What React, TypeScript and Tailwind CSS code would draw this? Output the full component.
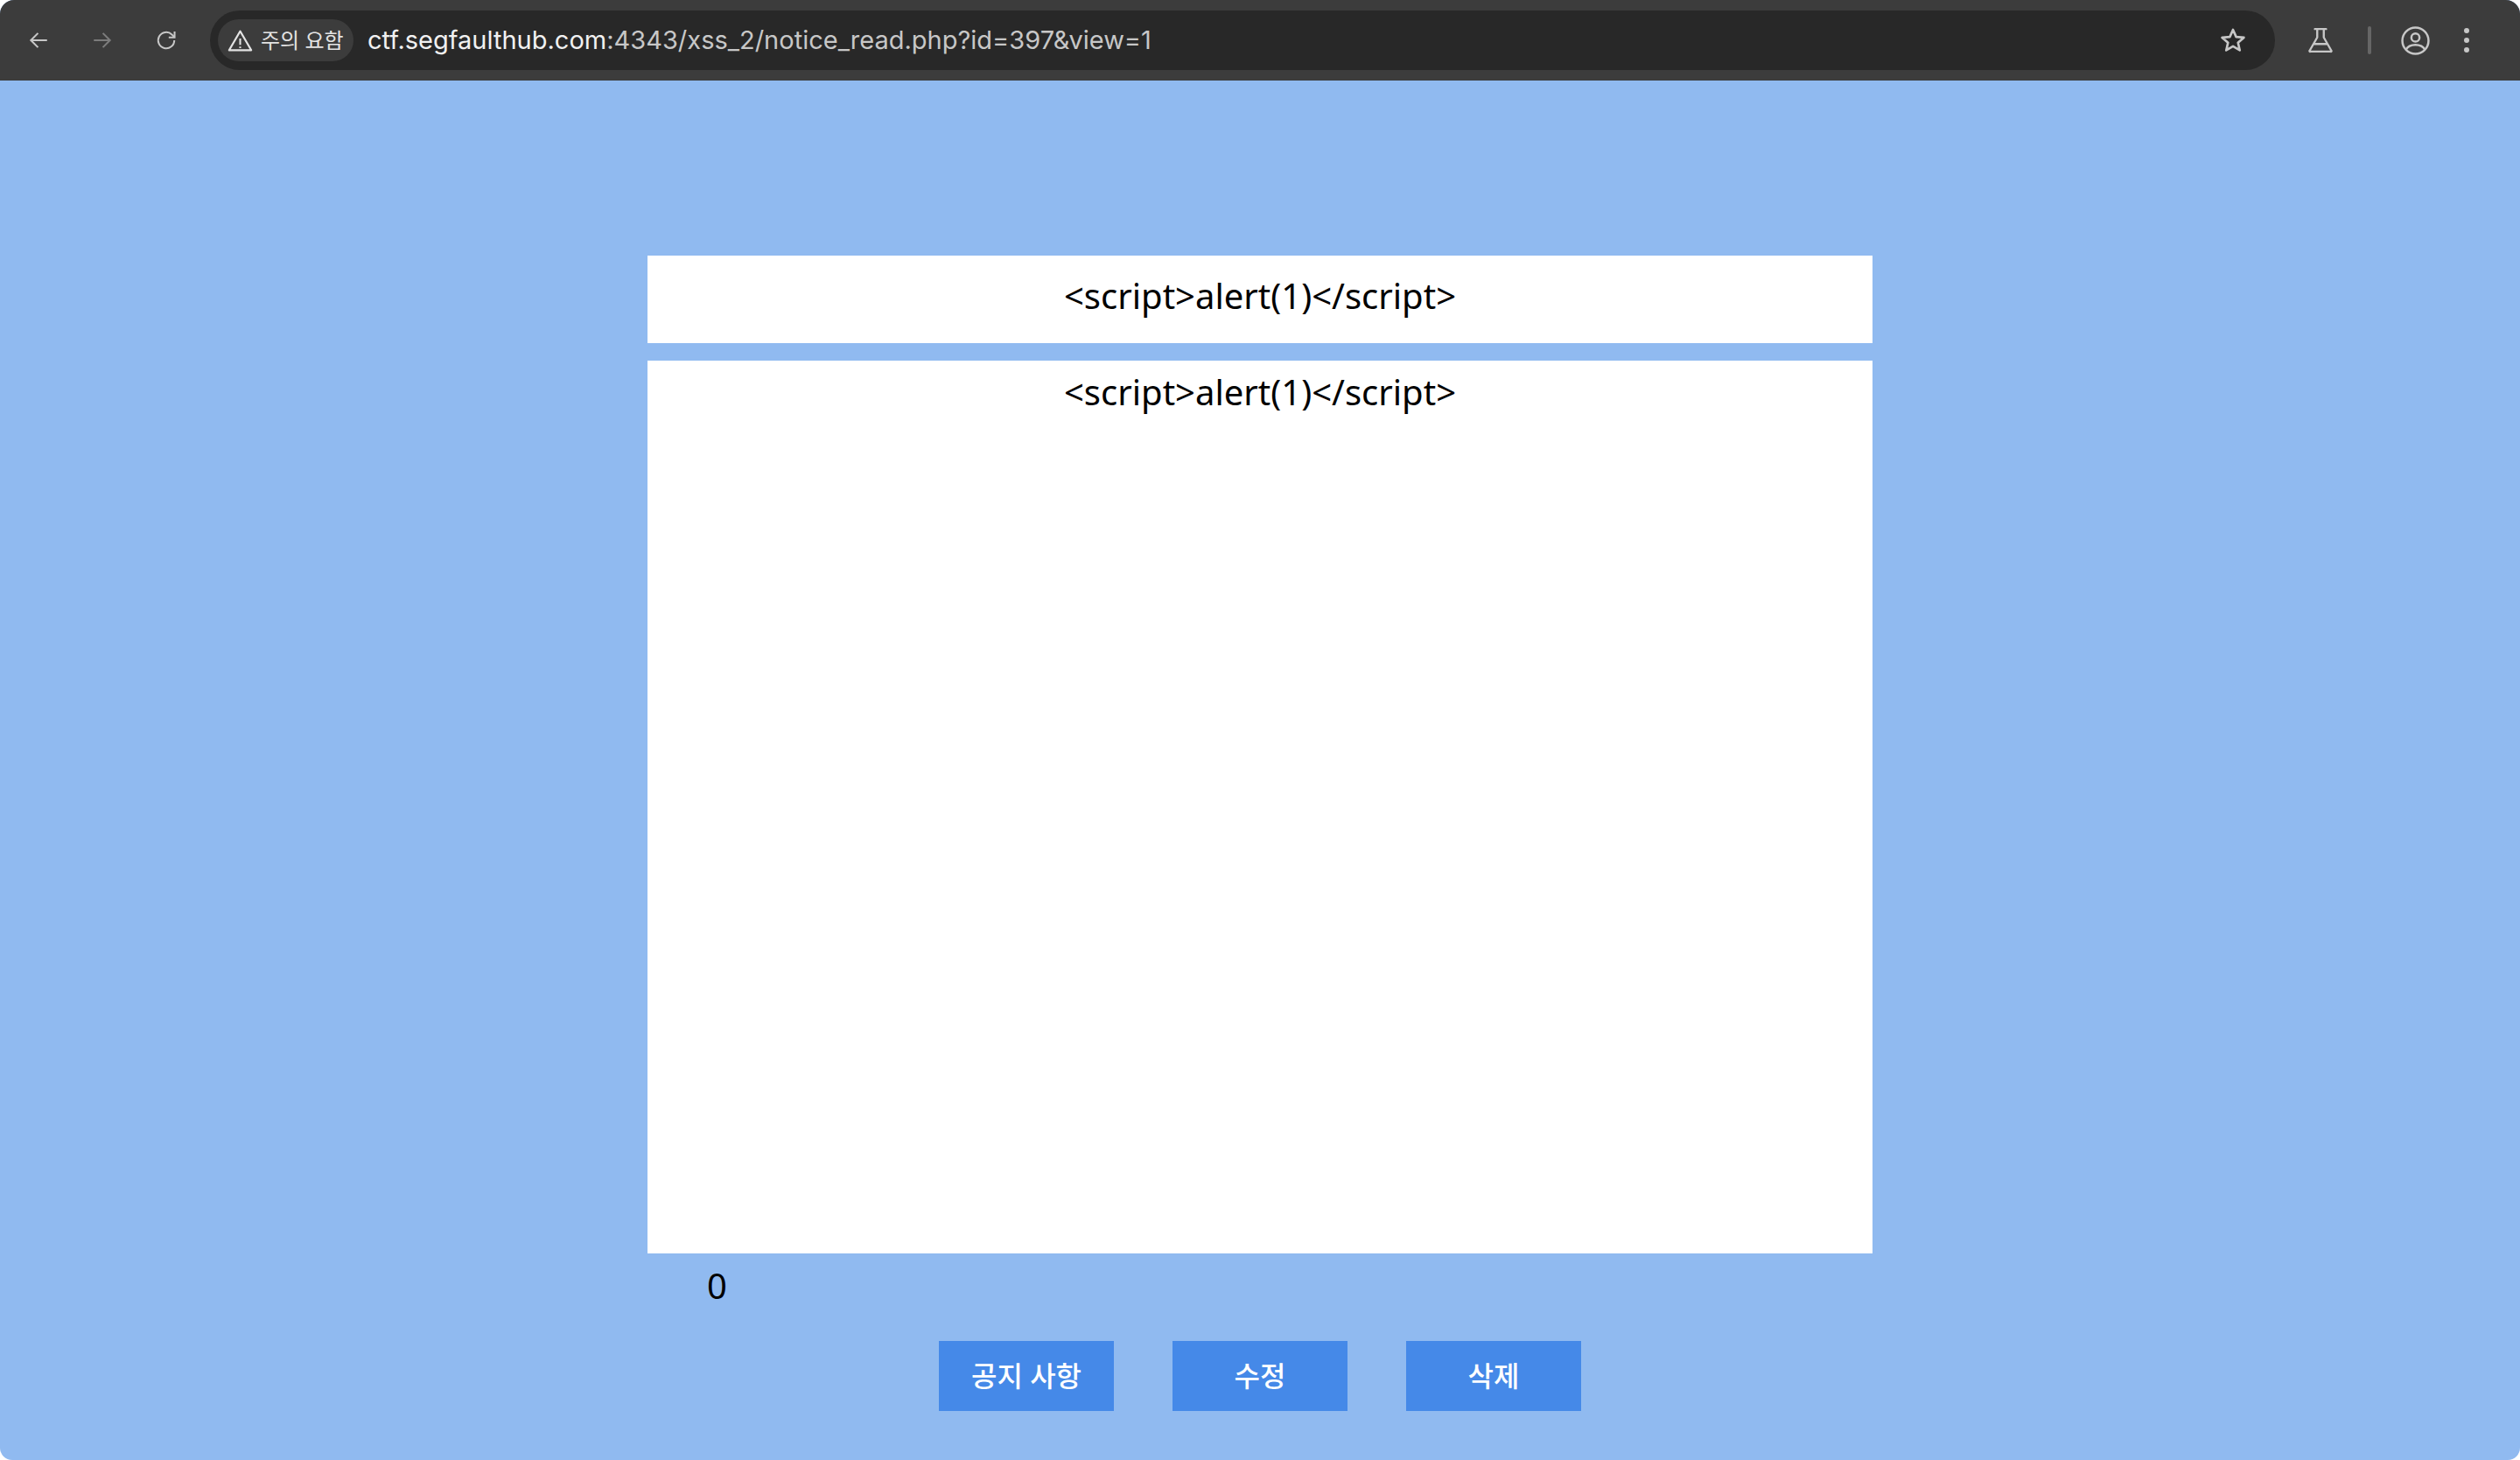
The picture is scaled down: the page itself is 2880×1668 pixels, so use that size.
import React from "react";

const kr = "font-['Noto_Sans','Noto_Sans_CJK_KR',sans-serif]";

function Back({ className }: { className: string }) {
  return (
    <svg viewBox="0 0 24 24" className={className} fill="none" stroke="currentColor" strokeWidth="1.9">
      <path d="M21 12H4M11.5 4.5 4 12l7.5 7.5" />
    </svg>
  );
}

export default function App() {
  return (
    <div className="h-[1668px] w-[2880px] overflow-hidden rounded-t-[16px] rounded-b-[14px] bg-[#90baf0] flex flex-col">
      <header className="h-[92px] shrink-0 bg-[#3c3c3c] flex items-center text-[#c7c7c7] font-['Inter',sans-serif]">
        <div className="w-[240px] shrink-0 flex items-center pl-[31px] gap-[47px]">
        <Back className="w-[26px] h-[26px]" />
        <Back className="w-[26px] h-[26px] rotate-180 text-[#7c7c7c]" />
        <svg viewBox="0 0 24 24" className="w-[26px] h-[26px]" fill="none" stroke="currentColor" strokeWidth="1.9">
          <path d="M20.5 12a8.5 8.5 0 1 1-2.6-6.1L20.5 8.6" />
          <path d="M20.8 2.8v6.2h-6.2" />
        </svg>
        </div>
        <div className="w-[2360px] h-[68px] rounded-full bg-[#282828] flex items-center pl-[9px] pr-[32px]">
          <div className={`w-[155px] h-[48px] rounded-full bg-[#3c3c3c] flex items-center pl-[11px] gap-[9px] text-[#e3e3e3] text-[24px] ${kr}`}>
            <svg viewBox="0 0 24 24" className="w-[29px] h-[29px] shrink-0" fill="none" stroke="currentColor" strokeWidth="1.7" strokeLinejoin="round">
              <path d="M12 3 22.5 21h-21zM12 10v6M12 17.5v1.5" />
            </svg>
            <span className="whitespace-nowrap">주의 요함</span>
          </div>
          <div className="ml-[16px] text-[29px] whitespace-nowrap text-[#c7c7c7]">
            <span className="text-[#f1f1f1]">ctf.segfaulthub.com</span>:4343/xss_2/notice_read.php?id=397&amp;view=1
          </div>
          <svg viewBox="0 0 24 24" className="ml-auto w-[32px] h-[32px] shrink-0" fill="none" stroke="currentColor" strokeWidth="2" strokeLinejoin="round">
            <path d="m12 3 2.7 6.1 6.6.6-5 4.4 1.5 6.5L12 17.2l-5.8 3.4 1.5-6.5-5-4.4 6.6-.6z" />
          </svg>
        </div>
        <div className="flex-1 flex items-center pl-[37px]">
          <svg viewBox="0 0 28 28" className="w-[30px] h-[30px] shrink-0" fill="none" stroke="currentColor" strokeWidth="2.2" strokeLinejoin="round" strokeLinecap="round">
            <path d="M8 2h12M10.5 2v9L2.5 25a.5.5 0 0 0 .5 1h22a.5.5 0 0 0 .5-1L17.5 11V2M7 18h14" />
          </svg>
          <div className="ml-[39px] w-[4px] h-[32px] rounded-full bg-[#666666]" />
          <svg viewBox="0 0 32 32" className="ml-[34px] w-[33px] h-[33px] shrink-0" fill="none" stroke="currentColor" strokeWidth="2.4">
            <circle cx="16" cy="16" r="14.5" />
            <circle cx="16" cy="12.5" r="4.5" />
            <path d="M5.5 26c2-4 6-5.5 10.500-5.500S24.500 22 26.500 26" />
          </svg>
          <div className="ml-[39px] flex flex-col gap-[5px]">
            <div className="w-[6px] h-[6px] rounded-full bg-[#c7c7c7]" />
            <div className="w-[6px] h-[6px] rounded-full bg-[#c7c7c7]" />
            <div className="w-[6px] h-[6px] rounded-full bg-[#c7c7c7]" />
          </div>
        </div>
      </header>
      <main className={`flex-1 flex flex-col items-center pt-[200px] text-black text-[40px] ${kr}`}>
        <div className="w-[1400px] h-[100px] bg-white text-center leading-[92px]">&lt;script&gt;alert(1)&lt;/script&gt;</div>
        <div className="mt-[20px] w-[1400px] h-[1020px] bg-white text-center leading-[72px]">&lt;script&gt;alert(1)&lt;/script&gt;</div>
        <div className="w-[1400px] h-[100px] pl-[68px] leading-[74px]">0</div>
        <div className="flex gap-[67px] text-white text-[32px] font-medium">
          <button className="w-[200px] h-[80px] bg-[#4589e8]">공지 사항</button>
          <button className="w-[200px] h-[80px] bg-[#4589e8]">수정</button>
          <button className="w-[200px] h-[80px] bg-[#4589e8]">삭제</button>
        </div>
      </main>
    </div>
  );
}
